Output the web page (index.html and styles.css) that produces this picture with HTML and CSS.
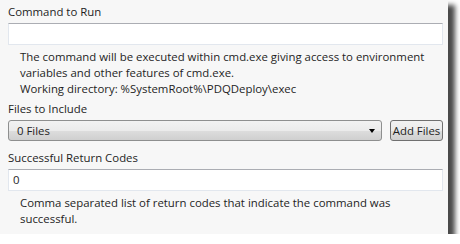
FILE: index.html
```html
<!DOCTYPE html>
<html lang="en">
<head>
    <meta charset="UTF-8">
    <title>Command</title>
    <link rel="stylesheet" href="styles.css">
</head>
<body>

<div class="panel">

    <div class="label">Command to Run</div>
    <div class="textbox"></div>
    <div class="hint">
        The command will be executed within cmd.exe giving access to environment
        variables and other features of cmd.exe.<br>
        Working directory: %SystemRoot%\PDQDeploy\exec
    </div>

    <div class="label">Files to Include</div>
    <div class="fileRow">
        <div class="combo">
            <span>0 Files</span>
            <span class="arrow"></span>
        </div>
        <div class="button">Add Files</div>
    </div>

    <div class="label">Successful Return Codes</div>
    <div class="textbox">0</div>
    <div class="hint">
        Comma separated list of return codes that indicate the command was
        successful.
    </div>

</div>

</body>
</html>
```

FILE: styles.css
```css
* {
    padding: 0;
    margin: 0;
    box-sizing: border-box;
}

body {
    background: #fff;
    font-family: "Open Sans", "Noto Sans", sans-serif;
    font-size: 11.4px;
    color: #1e1e1e;
}

.panel {
    width: 448px;
    height: 234px;
    background: #f7f7f7;
    padding: 2px 5px 0 8px;
    box-shadow: 6px 6px 5px 1px #4a4a4a;
}

.label {
    height: 19px;
    line-height: 19px;
    color: #1e1e1e;
}

.textbox {
    height: 22px;
    margin-top: 2px;
    background: #fff;
    border: 1px solid #e2e7ee;
    border-top-color: #abadb3;
    padding-left: 4px;
    line-height: 20px;
}

.hint {
    padding: 4px 0 2px 12px;
    line-height: 16px;
}

.fileRow {
    display: flex;
    gap: 8px;
    margin-top: 2px;
    margin-bottom: 7px;
}

.combo {
    flex: 1;
    height: 21px;
    border: 1px solid #8e8f8f;
    border-radius: 3px;
    background: linear-gradient(#f2f2f2, #ebebeb 50%, #dddddd 51%, #cfcfcf);
    display: flex;
    align-items: center;
    justify-content: space-between;
    padding: 0 6px 0 8px;
}

.arrow {
    width: 0;
    height: 0;
    border-left: 3.5px solid transparent;
    border-right: 3.5px solid transparent;
    border-top: 4px solid #000;
}

.button {
    width: 53px;
    height: 21px;
    border: 1px solid #707070;
    border-radius: 3px;
    background: linear-gradient(#f2f2f2, #ebebeb 50%, #dddddd 51%, #cfcfcf);
    text-align: center;
    line-height: 19px;
}
```
